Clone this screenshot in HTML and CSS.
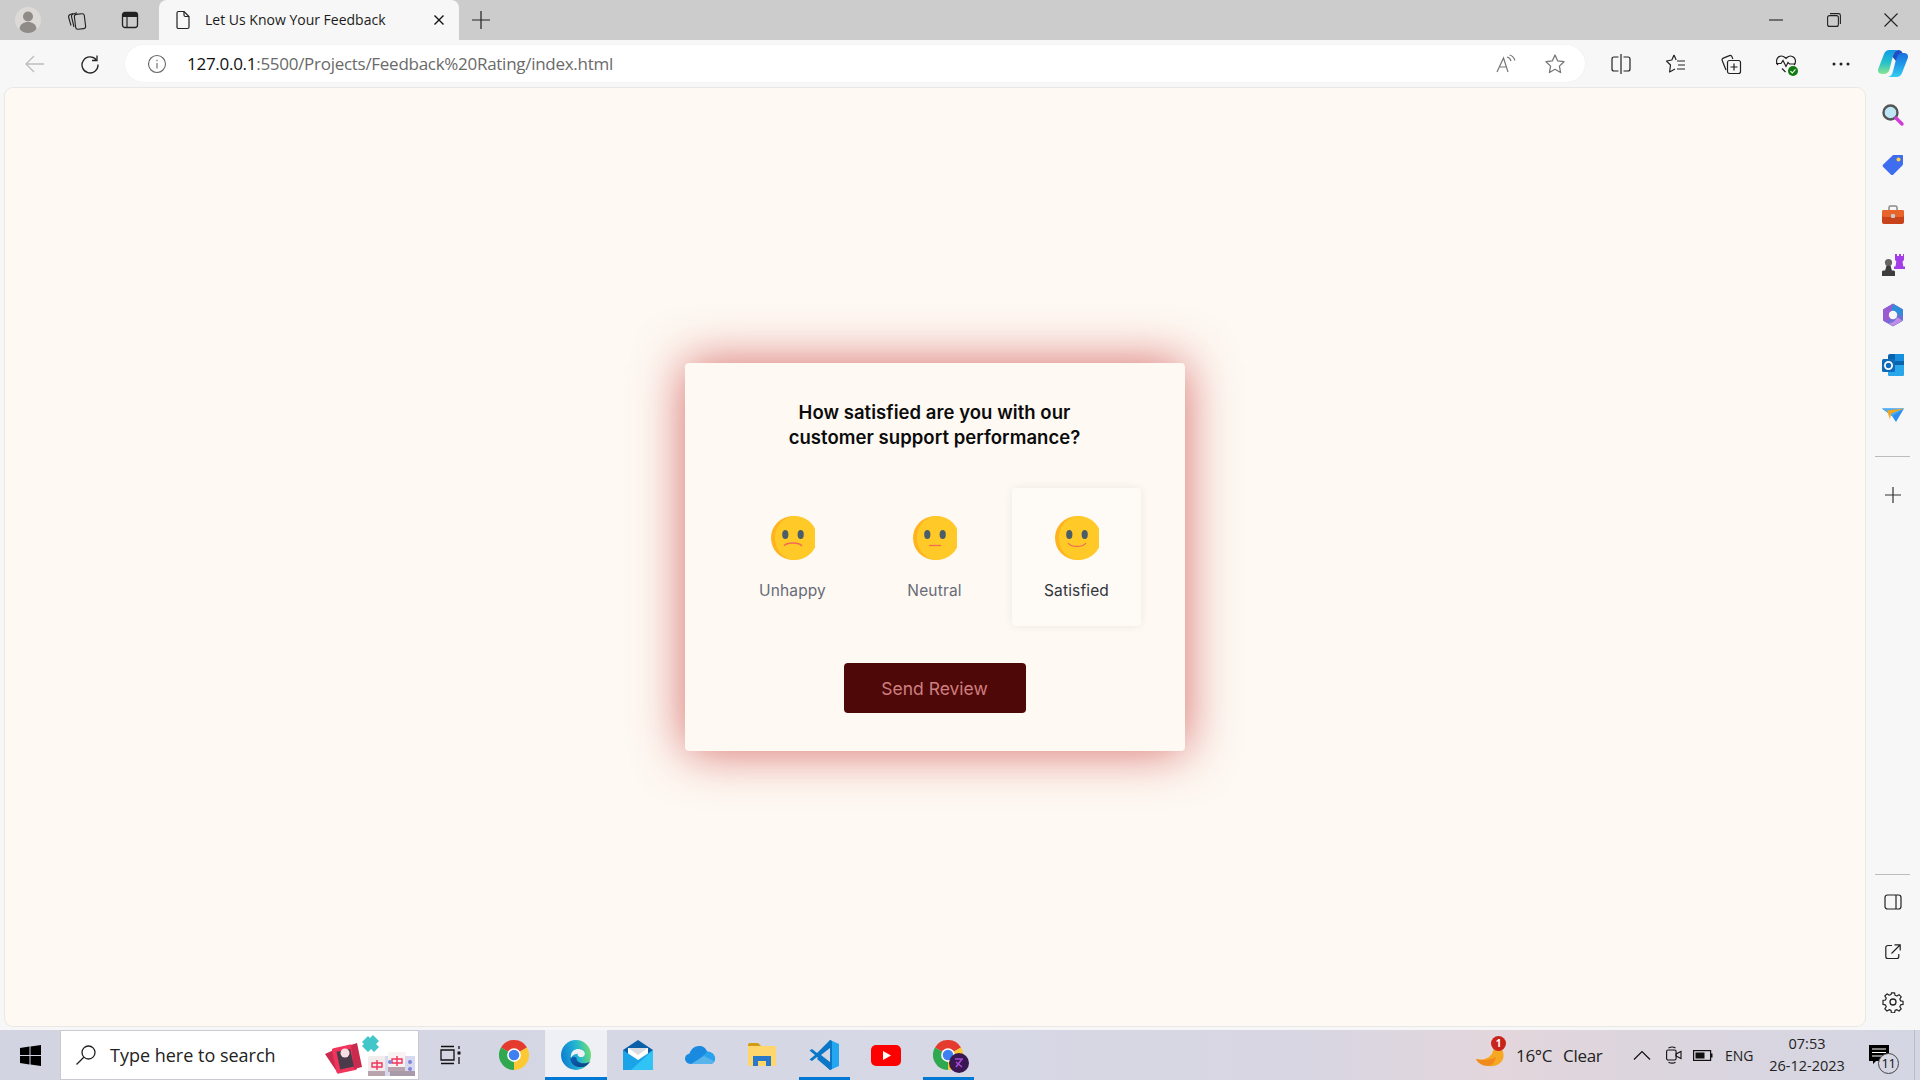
FILE: index.html
```html
<!DOCTYPE html>
<html lang="en">
<head>
<meta charset="utf-8">
<title>Let Us Know Your Feedback</title>
<link rel="stylesheet" href="styles.css">
</head>
<body>
<div class="window">
  <header class="tabstrip">
    <div class="strip-left">
      <span class="strip-btn strip-profile">
        <svg width="26" height="26" viewBox="0 0 26 26"><circle cx="13" cy="13" r="13" fill="#dcdad6"/><circle cx="13" cy="9.5" r="5" fill="#8f8c88"/><path d="M4.5 22c.5-5 4-7 8.500-7s8 2 8.500 7c-2 2.500-5 4-8.500 4s-6.500-1.500-8.500-4z" fill="#8f8c88"/></svg>
      </span>
      <span class="strip-btn strip-coll">
        <svg width="22" height="22" viewBox="0 0 22 22" fill="none" stroke="#222" stroke-width="1.100"><path d="M5 16.500 2.700 8.500C2.300 7 3 6 4.200 5.500L7 4.500"/><path d="M8 18 5.600 8c-.4-1.500.4-2.600 1.600-3l3.800-1.300"/><rect x="9" y="5" width="10" height="15" rx="2.200" transform="rotate(-7 14 12.500)"/></svg>
      </span>
      <span class="strip-btn strip-vert">
        <svg width="20" height="20" viewBox="0 0 20 20" fill="none"><rect x="2.500" y="2.500" width="15" height="15" rx="2.500" stroke="#222" stroke-width="1.300"/><path d="M2.500 5a2.500 2.500 0 0 1 2.500-2.500h10A2.500 2.500 0 0 1 17.500 5v2h-15z" fill="#222"/><path d="M7 7v10" stroke="#222" stroke-width="1.200"/></svg>
      </span>
    </div>
    <div class="tab">
      <svg width="18" height="20" viewBox="0 0 18 20" fill="none" stroke="#222" stroke-width="1.200"><path d="M3 3c0-1 .7-1.500 1.500-1.500H10l5 5V17c0 1-.7 1.500-1.500 1.500h-9C3.700 18.500 3 18 3 17z"/><path d="M10 1.500V5c0 1 .6 1.500 1.500 1.500H15"/></svg>
      <span class="tab-title">Let Us Know Your Feedback</span>
      <svg class="tab-close" width="12" height="12" viewBox="0 0 12 12" stroke="#111" stroke-width="1.400"><path d="M1.500 1.500l9 9M10.500 1.500l-9 9"/></svg>
    </div>
    <span class="new-tab">
      <svg width="18" height="18" viewBox="0 0 18 18" stroke="#222" stroke-width="1.200"><path d="M9 0v18M0 9h18"/></svg>
    </span>
    <div class="win-controls">
      <span class="win-btn"><svg width="14" height="14" viewBox="0 0 14 14" stroke="#222" stroke-width="1.100"><path d="M0 7h14"/></svg></span>
      <span class="win-btn"><svg width="14" height="14" viewBox="0 0 14 14" fill="none" stroke="#222" stroke-width="1.100"><rect x=".6" y="2.600" width="10.800" height="10.800" rx="2"/><path d="M3 .6h8.500c1.100 0 1.900.8 1.900 1.900V11"/></svg></span>
      <span class="win-btn"><svg width="14" height="14" viewBox="0 0 14 14" stroke="#222" stroke-width="1.100"><path d="M.5.500l13 13M13.500.500l-13 13"/></svg></span>
    </div>
  </header>

  <div class="toolbar">
    <span class="nav-btn nav-back"><svg width="20" height="18" viewBox="0 0 20 18" fill="none" stroke="#bdbdbd" stroke-width="1.300"><path d="M19 9H1M9 1 1 9l8 8"/></svg></span>
    <span class="nav-btn nav-reload"><svg width="20" height="20" viewBox="0 0 20 20" fill="none" stroke="#222" stroke-width="1.300"><path d="M16.300 6A8 8 0 1 0 18 10.500"/><path d="M17 1.500V6.500h-5"/></svg></span>
    <div class="address">
      <svg class="addr-info" width="20" height="20" viewBox="0 0 20 20" fill="none" stroke="#666" stroke-width="1.100"><circle cx="10" cy="10" r="8.500"/><path d="M10 9v5.500M10 5.800v1.400"/></svg>
      <span class="url"><span class="url-host">127.0.0.1</span>:5500/Projects/Feedback%20Rating/index.html</span>
      <svg class="addr-read" width="22" height="20" viewBox="0 0 22 20" fill="none" stroke="#777" stroke-width="1.200"><path d="M1 18 7.500 4 12 18M3.500 13h7"/><path d="M11 3c2 .5 3.500 2 4 4M13.500 1c2.500.5 4.500 2.500 5.500 5.500"/></svg>
      <svg class="addr-star" width="22" height="22" viewBox="0 0 22 22" fill="none" stroke="#777" stroke-width="1.300" stroke-linejoin="round"><path d="m11 2 2.700 5.900 6.300.8-4.600 4.400 1.200 6.400L11 16.300l-5.600 3.200 1.200-6.400L2 8.700l6.300-.8z"/></svg>
    </div>
    <div class="tools">
      <span class="tool"><svg width="20" height="22" viewBox="0 0 20 22" fill="none" stroke="#222" stroke-width="1.200"><path d="M7.500 4H3C2 4 1 4.800 1 6v10c0 1.200 1 2 2 2h4.500M12.500 4H17c1 0 2 .8 2 2v10c0 1.200-1 2-2 2h-4.500M10 1v20"/></svg></span>
      <span class="tool"><svg width="22" height="22" viewBox="0 0 22 22" fill="none" stroke="#222" stroke-width="1.200" stroke-linejoin="round"><path d="M9 2 6.800 7 1.500 8l4 4L4.600 19l5.400-3M9 2l2.200 5"/><path d="M12 8h8M13 12h7M12 16h8"/></svg></span>
      <span class="tool"><svg width="22" height="22" viewBox="0 0 22 22" fill="none" stroke="#222" stroke-width="1.200"><path d="M6 17 2.200 7.500C1.800 6.500 2.300 5.500 3.300 5.100l6.200-2.500c1-.4 2 0 2.400 1l1 2.400"/><rect x="7.500" y="7.500" width="13" height="13" rx="2"/><path d="M14 10.500v7M10.500 14h7"/></svg></span>
      <span class="tool tool-health">
        <svg width="22" height="20" viewBox="0 0 22 20" fill="none" stroke="#222" stroke-width="1.200"><path d="M3 11C1 9 1 5.500 3 3.500c2-2 5-2 7 0l1 1 1-1c2-2 5-2 7 0 2 2 2 5.500 0 7.500"/><path d="M1 9.500h5l2-3 3 6 2-4 1.500 1.500H20M7 14.500l3.500 3.500"/></svg>
        <svg class="health-badge" width="10" height="10" viewBox="0 0 10 10"><circle cx="5" cy="5" r="5" fill="#107c10"/><path d="M2.500 5.200 4.300 7l3.200-3.600" fill="none" stroke="#fff" stroke-width="1.100"/></svg>
      </span>
      <span class="tool"><svg width="20" height="4" viewBox="0 0 20 4" fill="#222"><circle cx="3" cy="2" r="1.500"/><circle cx="10" cy="2" r="1.500"/><circle cx="17" cy="2" r="1.500"/></svg></span>
      <span class="tool tool-copilot">
        <svg width="30" height="27" viewBox="0 0 30 27">
          <defs>
            <linearGradient id="cpA" x1="0" y1="0" x2="0" y2="1"><stop offset="0" stop-color="#0f9be8"/><stop offset=".55" stop-color="#2ac3c8"/><stop offset="1" stop-color="#8be58f"/></linearGradient>
            <linearGradient id="cpB" x1="0" y1="0" x2="0" y2="1"><stop offset="0" stop-color="#1b6fe0"/><stop offset=".5" stop-color="#1f9be8"/><stop offset="1" stop-color="#35cdf2"/></linearGradient>
          </defs>
          <path d="M6 4C7 1.500 9 0 11.500 0H20c-3 .8-4 2.500-4.800 5L11.500 19.500c-.8 2.800-2.800 4.500-5.500 4.500H4C1 24-.7 21.700.2 19z" fill="url(#cpA)"/>
          <path d="M24 23c-1 2.500-3 4-5.500 4H10c3-.8 4-2.500 4.800-5L18.500 7.500C19.300 4.700 21.300 3 24 3h2c3 0 4.700 2.300 3.800 5z" fill="url(#cpB)"/>
          <path d="M20 0c2.500 0 3.800 1.300 4.500 3-2.500.3-4.700 1.800-5.500 4.500l-1 3.400-3.500-3.900.7-2C16 2.500 17 .8 20 0z" fill="#1c4fc4"/>
        </svg>
      </span>
    </div>
  </div>

  <div class="main">
    <main class="viewport">
      <section class="card">
        <h1 class="question">How satisfied are you with our<br>customer support performance?</h1>
        <div class="ratings">
          <div class="rating">
            <svg class="emoji" viewBox="0 0 44 44"><circle cx="22" cy="22" r="22" fill="#ffb41f"/><path d="M24 0a22 22 0 0 1 0 44C13 44 4 34 4 22S13 0 24 0z" fill="#ffca28"/><ellipse cx="14.300" cy="18.500" rx="3.100" ry="4.500" fill="#4b5d69"/><ellipse cx="29.700" cy="18.500" rx="3.100" ry="4.500" fill="#4b5d69"/><path d="M13 30c2.500-4 15-4 18 0" fill="none" stroke="#ef6c55" stroke-width="1.300"/></svg>
            <span class="rating-label">Unhappy</span>
          </div>
          <div class="rating">
            <svg class="emoji" viewBox="0 0 44 44"><circle cx="22" cy="22" r="22" fill="#ffb41f"/><path d="M24 0a22 22 0 0 1 0 44C13 44 4 34 4 22S13 0 24 0z" fill="#ffca28"/><ellipse cx="14.300" cy="18.500" rx="3.100" ry="4.500" fill="#4b5d69"/><ellipse cx="29.700" cy="18.500" rx="3.100" ry="4.500" fill="#4b5d69"/><path d="M16 29.500h12" fill="none" stroke="#ef6c55" stroke-width="1.300"/></svg>
            <span class="rating-label">Neutral</span>
          </div>
          <div class="rating rating-active">
            <svg class="emoji" viewBox="0 0 44 44"><circle cx="22" cy="22" r="22" fill="#ffb41f"/><path d="M24 0a22 22 0 0 1 0 44C13 44 4 34 4 22S13 0 24 0z" fill="#ffca28"/><ellipse cx="14.300" cy="18.500" rx="3.100" ry="4.500" fill="#4b5d69"/><ellipse cx="29.700" cy="18.500" rx="3.100" ry="4.500" fill="#4b5d69"/><path d="M13 27c3 4.500 15 4.500 18 0" fill="none" stroke="#ef6c55" stroke-width="1.300"/></svg>
            <span class="rating-label">Satisfied</span>
          </div>
        </div>
        <button class="send" type="button">Send Review</button>
      </section>
    </main>
    <aside class="sidebar">
      <div class="side-top">
        <span class="side-icon"><svg width="24" height="24" viewBox="0 0 24 24"><circle cx="9.500" cy="9.500" r="7" fill="#bfe6f7" stroke="#555" stroke-width="2.400"/><path d="m15 15 6 6" stroke="#d23bd8" stroke-width="3.400" stroke-linecap="round"/></svg></span>
        <span class="side-icon"><svg width="24" height="24" viewBox="0 0 24 24"><path d="M13 2h8c.6 0 1 .4 1 1v8c0 .6-.2 1-.6 1.400l-9 9c-.8.800-1.800.800-2.600 0L2.200 14c-.8-.8-.8-1.800 0-2.600l9.400-9C12 2.200 12.400 2 13 2z" fill="#3f6df0"/><circle cx="17.500" cy="6.500" r="2" fill="#ffd04a"/></svg></span>
        <span class="side-icon"><svg width="24" height="24" viewBox="0 0 24 24"><path d="M8 7V4.500C8 3.500 8.700 3 9.500 3h5c.8 0 1.500.5 1.500 1.500V7" fill="none" stroke="#8a8a8a" stroke-width="1.500"/><rect x="1" y="7" width="22" height="14" rx="2" fill="#c9431a"/><rect x="1" y="7" width="22" height="7" rx="2" fill="#e9642a"/><rect x="10" y="11" width="4" height="4" rx="1" fill="#c9c9c9"/></svg></span>
        <span class="side-icon"><svg width="24" height="24" viewBox="0 0 24 24"><path d="M14 1h2v2h2V1h2v2h2V1h1v6l-1.500 1.500.8 5H24V16H13v-2.500h1.500l.8-5L14 7z" fill="#a33de8"/><circle cx="7.500" cy="9.500" r="3.600" fill="#666"/><path d="M5.500 12.500h4l1.500 5.500H4zM1 19c0-1 .7-1.500 1.500-1.500h10c.8 0 1.500.5 1.500 1.500v4H1z" fill="#3d3d3d"/></svg></span>
        <span class="side-icon"><svg width="24" height="24" viewBox="0 0 24 24"><path d="M12 1 21.500 6.500v11L12 23l-9.500-5.500v-11z" fill="#6d6fd8" stroke="#6d6fd8" stroke-width="1" stroke-linejoin="round"/><path d="M12 1 21.500 6.500v7l-6-3.500a4.500 4.500 0 0 0-6 0z" fill="#2c8fd9"/><path d="M2.500 6.500 12 1l-2.500 9v5l-3 4-4-2z" fill="#9a5bd0"/><path d="M21.500 17.500 12 23l-5-3c4 0 8-2 8.500-6z" fill="#c08be6"/><circle cx="12" cy="12" r="4.200" fill="#f7f7f7"/></svg></span>
        <span class="side-icon"><svg width="24" height="24" viewBox="0 0 24 24"><rect x="7" y="1" width="16" height="22" rx="2" fill="#0a64ad"/><path d="M7 12h16v9a2 2 0 0 1-2 2H9a2 2 0 0 1-2-2z" fill="#28a8ea"/><path d="M14 1h9v7h-9z" fill="#1490df"/><rect x="1" y="6" width="13" height="13" rx="1.500" fill="#0f6cbd"/><circle cx="7.500" cy="12.500" r="3.600" fill="none" stroke="#fff" stroke-width="1.800"/></svg></span>
        <span class="side-icon"><svg width="24" height="24" viewBox="0 0 24 24"><path d="M1 5.500h22L15 19l-4-6z" fill="#2f8ff0"/><path d="M1 5.500h22L11 13z" fill="#4aaef5"/><path d="M6 7.500 23 5.500 10 10.500l-1 6z" fill="#f4a71d"/></svg></span>
        <hr class="side-sep side-sep-top">
        <span class="side-icon"><svg width="16" height="16" viewBox="0 0 16 16" stroke="#333" stroke-width="1.200"><path d="M8 0v16M0 8h16"/></svg></span>
      </div>
      <div class="side-bottom">
        <hr class="side-sep">
        <span class="side-icon"><svg width="20" height="20" viewBox="0 0 20 20" fill="none" stroke="#222" stroke-width="1.200"><rect x="2" y="3" width="16" height="14" rx="2.500"/><path d="M13 3v14"/></svg></span>
        <span class="side-icon"><svg width="20" height="20" viewBox="0 0 20 20" fill="none" stroke="#222" stroke-width="1.200"><path d="M9 3.500H5C3.500 3.500 2.800 4.500 2.800 5.500v9c0 1.200.8 2 2 2h9c1.200 0 2-.8 2-2V12"/><path d="M8.500 11.500 17 3M11.500 2.800H17.200V8.500"/></svg></span>
        <span class="side-icon"><svg width="22" height="22" viewBox="0 0 22 22" fill="none" stroke="#222" stroke-width="1.300" stroke-linejoin="round"><path d="m9.300 1h3.400l.5 2.700 2 .8 2.300-1.500 2.400 2.400-1.500 2.300.8 2 2.700.5v3.400l-2.700.5-.8 2 1.500 2.300-2.400 2.400-2.300-1.500-2 .8-.5 2.700H9.300l-.5-2.700-2-.8-2.300 1.500-2.400-2.400 1.500-2.300-.8-2-2.700-.5V9.300l2.700-.5.8-2-1.500-2.300 2.400-2.400 2.300 1.500 2-.8z" transform="translate(.9 .9) scale(.92)"/><circle cx="11" cy="11" r="3"/></svg></span>
      </div>
    </aside>
  </div>

  <footer class="taskbar">
    <div class="task-left">
      <span class="start"><svg width="21" height="21" viewBox="0 0 21 21" fill="#000"><path d="M0 3 9.500 1.600v8.400H0zM10.500 1.500 21 0v10h-10.500zM0 11h9.500v8.400L0 18zM10.500 11H21v10l-10.500-1.500z"/></svg></span>
      <div class="search">
        <svg width="22" height="22" viewBox="0 0 22 22" fill="none" stroke="#222" stroke-width="1.300"><circle cx="13.500" cy="8.500" r="6.500"/><path d="M8.800 13.200 1.500 20.500"/></svg>
        <span class="search-text">Type here to search</span>
        <span class="search-art">
          <svg width="92" height="42" viewBox="0 0 92 42">
            <path d="M1 20 14 14l7 21-8 3z" fill="#c92a4e"/>
            <rect x="10" y="12" width="21" height="26" rx="2" transform="rotate(-12 21 25)" fill="#f0345c"/>
            <path d="M27 11l6-2 5 24-8 2z" fill="#c92a4e"/>
            <rect x="14" y="16" width="14" height="18" transform="rotate(-12 22 24)" fill="#4a3a4a"/>
            <circle cx="21" cy="19" r="4.500" fill="#f4dfe4"/>
            <path d="M38 8 44 2l2 2 3-3 6 6-3 3 3 3-5 5-3-3-3 3-6-6 2-2z" fill="#41c7c9"/>
            <rect x="44" y="22" width="18" height="20" rx="2" fill="#f3ecec"/>
            <rect x="44" y="37" width="18" height="5" fill="#b9a3ad"/>
            <rect x="61" y="22" width="10" height="20" fill="#d8d8ee"/>
            <rect x="64" y="18" width="18" height="20" rx="2" fill="#f8f2f2"/>
            <rect x="64" y="33" width="18" height="5" fill="#b9a3ad"/>
            <rect x="81" y="22" width="10" height="20" fill="#d8d8ee"/>
            <rect x="66" y="37" width="25" height="5" fill="#a89aa8"/>
            <path d="M53 26v10M48 29h10v4H48zM73 22v10M68 25h10v4H68z" fill="none" stroke="#f0345c" stroke-width="1.400"/>
            <circle cx="66" cy="28" r="2" fill="#7d86d8"/><circle cx="86" cy="28" r="2" fill="#7d86d8"/><circle cx="86" cy="35" r="2" fill="#7d86d8"/>
          </svg>
        </span>
      </div>
      <span class="cell cell-taskview"><svg width="22" height="20" viewBox="0 0 22 20" fill="none" stroke="#111" stroke-width="1.300"><path d="M1 1.500h13M1 18.500h13M1 5h13v10H1zM19 1v3M19 12v7"/><rect x="17.500" y="6.500" width="3" height="3" fill="#111" stroke="none"/></svg></span>
      <span class="cell">
        <svg width="30" height="30" viewBox="0 0 48 48"><path d="M24 24 3.200 12A24 24 0 0 1 44.800 12z" fill="#e53a2e"/><path d="M24 24 44.800 12A24 24 0 0 1 24 48z" fill="#fcc934"/><path d="M24 24V48A24 24 0 0 1 3.200 12z" fill="#2fa84f"/><circle cx="24" cy="24" r="11" fill="#fff"/><circle cx="24" cy="24" r="8.500" fill="#3f7ff0"/></svg>
      </span>
      <span class="cell cell-active">
        <svg width="30" height="30" viewBox="0 0 48 48">
          <defs>
            <linearGradient id="edgeA" x1="0" y1=".5" x2="1" y2=".3"><stop offset="0" stop-color="#0e7fd2"/><stop offset=".55" stop-color="#24b6d2"/><stop offset="1" stop-color="#6fe06c"/></linearGradient>
            <linearGradient id="edgeB" x1="0" y1="0" x2="1" y2="1"><stop offset="0" stop-color="#0d63b8"/><stop offset="1" stop-color="#0a3f80"/></linearGradient>
          </defs>
          <circle cx="24" cy="24" r="24" fill="url(#edgeA)"/>
          <path d="M15 29c0 10 10 16 20 14 5-1 9-4 12-9-4 3-9 4-14 3-6-1-9-5-8-9-4-2-10-2-10 1z" fill="url(#edgeB)"/>
          <path d="M16 24c1-7 8-11 15-9 5 1 8 5 7 8-1 4-5 5-8 4-3-1-4-3-3-5-4 0-9 2-11 7-.5-1-.5-3 0-5z" fill="#eff0f6"/>
        </svg>
      </span>
      <span class="cell">
        <svg width="30" height="30" viewBox="0 0 30 30"><path d="M15 0 30 10v4H0v-4z" fill="#0b5fa8"/><path d="M5 8h20v12H5z" fill="#fff"/><path d="M5 8h20l-10 7z" fill="#d9dde2"/><path d="M0 10l15 10 15-10v20H0z" fill="#1ba3e8"/><path d="M30 10v20H8z" fill="#30c3f5"/></svg>
      </span>
      <span class="cell">
        <svg width="30" height="20" viewBox="0 0 30 20"><path d="M6 19C2 19 0 16 0 13.500 0 11 2 9 4.500 8.500 6 4 9.500 1 14 1c4 0 7 2 8 5.500 4 0 8 3 8 7 0 3-2 5.500-5 5.500z" fill="#1a8ae0"/><path d="M22 6.500c4 0 8 3 8 7 0 3-2 5.500-5 5.500H8L20 9z" fill="#2aa3ee"/><path d="M6 19h19c2 0 3.500-1 4.500-2.500L19 11z" fill="#59b4ec"/></svg>
      </span>
      <span class="cell">
        <svg width="28" height="24" viewBox="0 0 28 24"><path d="M0 2c0-1 .7-2 2-2h8l3 3h-13z" fill="#d39a14"/><rect y="3" width="28" height="20" rx="1" fill="#ffd66b"/><path d="M5 23V13h18v10h-5v-5h-8v5z" fill="#2a78c8"/></svg>
      </span>
      <span class="cell cell-running">
        <svg width="30" height="30" viewBox="0 0 30 30"><path d="M21 0 30 4v22l-9 4z" fill="#24a6f0"/><path d="M21 0v30L8 19l4-4z" fill="#0a78c7"/><path d="M21 0 8 13 3 9 .5 10.500 6 15 .5 19.500 3 21l5-4 13 13 2-1V1z" fill="#0a78c7"/><path d="M21 8v14l-9-7z" fill="#d4d6e4"/></svg>
      </span>
      <span class="cell">
        <svg width="30" height="21" viewBox="0 0 30 21"><rect width="30" height="21" rx="5" fill="#f00"/><path d="m12 6 8 4.500-8 4.500z" fill="#fff"/></svg>
      </span>
      <span class="cell cell-running cell-profile">
        <svg width="30" height="30" viewBox="0 0 48 48"><path d="M24 24 3.200 12A24 24 0 0 1 44.800 12z" fill="#e53a2e"/><path d="M24 24 44.800 12A24 24 0 0 1 24 48z" fill="#fcc934"/><path d="M24 24V48A24 24 0 0 1 3.200 12z" fill="#2fa84f"/><circle cx="24" cy="24" r="11" fill="#fff"/><circle cx="24" cy="24" r="8.500" fill="#3f7ff0"/></svg>
        <svg class="profile-badge" width="20" height="20" viewBox="0 0 20 20"><circle cx="10" cy="10" r="10" fill="#3a1750"/><path d="M6 6h8M13 6 7 14M7 9l6 5" fill="none" stroke="#a44bd8" stroke-width="1.600"/></svg>
      </span>
    </div>
    <div class="tray">
      <span class="weather">
        <svg width="30" height="26" viewBox="0 0 30 26"><path d="M0 17c7 2 15-1 17-8 1-3 2-5 3-7 6 3 9 9 7 15-2 5-8 8-14 7C7 23 2 21 0 17z" fill="#f7a823"/><path d="M0 17c7 2 14 1 20-2-1 5-4 9-8 9C6 24 2 21 0 17z" fill="#f08a1c"/></svg>
        <span class="weather-badge">1</span>
      </span>
      <span class="weather-temp">16°C</span>
      <span class="weather-text">Clear</span>
      <span class="tray-icon tray-chevron"><svg width="18" height="10" viewBox="0 0 18 10" fill="none" stroke="#111" stroke-width="1.200"><path d="M1 9.500 9 1.500l8 8"/></svg></span>
      <span class="tray-icon tray-meet"><svg width="16" height="18" viewBox="0 0 16 18" fill="none" stroke="#111" stroke-width="1.100"><rect x=".6" y="4" width="9.500" height="10" rx="1.500"/><path d="m10 8 5-2.500v7L10 10zM2.500 2C5 .8 7.500.8 9.500 2M2.500 16.200c2.500 1.200 5 1.200 7 0"/></svg></span>
      <span class="tray-icon tray-batt"><svg width="20" height="11" viewBox="0 0 20 11" fill="none"><rect x=".6" y=".6" width="17" height="9.800" stroke="#111" stroke-width="1.200"/><rect x="2.500" y="2.500" width="9" height="6" fill="#111"/><rect x="18" y="3.500" width="1.500" height="4" fill="#111"/></svg></span>
      <span class="tray-lang">ENG</span>
      <span class="clock"><span>07:53</span><span>26-12-2023</span></span>
      <span class="notify">
        <svg width="20" height="20" viewBox="0 0 20 20"><path d="M0 0h20v16H7l-3 3v-3H0z" fill="#000"/><path d="M3 4h14M3 7.500h14M3 11h14" stroke="#fff" stroke-width="1"/></svg>
        <span class="notify-count">11</span>
      </span>
      <span class="show-desktop"></span>
    </div>
  </footer>
</div>
</body>
</html>
```

FILE: styles.css
```css
* { box-sizing: border-box; }
html, body { margin: 0; height: 100%; }
body { font-family: "Open Sans", "Noto Sans", sans-serif; background: #f7f7f7; overflow: hidden; }

.window { display: flex; flex-direction: column; width: 1920px; height: 1080px; }

/* tab strip */
.tabstrip { display: flex; align-items: center; height: 40px; background: #cccccc; flex: none; }
.strip-left { display: flex; align-items: center; width: 159px; }
.strip-btn { display: flex; align-items: center; justify-content: center; }
.strip-profile { width: 26px; margin-left: 15px; }
.strip-coll { width: 22px; margin-left: 25px; }
.strip-vert { width: 20px; margin-left: 32px; }
.tab { display: flex; align-items: center; width: 300px; height: 40px; background: #f7f7f7; border-radius: 8px 8px 0 0; padding: 0 0 1px 15px; }
.tab-title { font-size: 14px; color: #1b1b1b; margin-left: 13px; width: 228px; white-space: nowrap; }
.tab-close { flex: none; }
.new-tab { display: flex; margin-left: 13px; }
.win-controls { display: flex; margin-left: auto; }
.win-btn { display: flex; align-items: center; justify-content: center; width: 57.500px; height: 40px; }

/* toolbar */
.toolbar { display: flex; align-items: center; height: 48px; background: #f7f7f7; flex: none; padding-bottom: 1px; }
.nav-btn { display: flex; align-items: center; justify-content: center; }
.nav-back { width: 20px; margin-left: 25px; }
.nav-reload { width: 20px; margin-left: 35px; }
.address { display: flex; align-items: center; width: 1460px; height: 37px; margin-left: 25px; background: #fff; border-radius: 19px; padding-left: 22px; box-shadow: 0 0 2px rgba(0,0,0,.06); }
.url { font-size: 17px; color: #6a6a6a; margin-left: 20px; white-space: nowrap; letter-spacing: -.28px; }
.url-host { color: #111; }
.addr-read { margin-left: auto; }
.addr-star { margin-left: 26px; margin-right: 19px; }
.tools { display: flex; align-items: center; margin-left: 8px; }
.tool { display: flex; align-items: center; justify-content: center; width: 55px; height: 48px; position: relative; }
.tool-copilot { width: 50px; margin-left: 0; }
.health-badge { position: absolute; left: 30px; top: 26px; }

/* main area */
.main { display: flex; flex: 1; min-height: 0; }
.viewport { display: flex; align-items: center; justify-content: center; width: 1860px; height: 938px; margin-left: 5px; background: #fef9f3; border-radius: 8px; box-shadow: 0 0 0 1px #e9e8e6; }
.card { display: flex; flex-direction: column; align-items: center; width: 500px; height: 388px; padding: 37px 44px 0 43px; background: #fef9f3; border-radius: 4px; box-shadow: 0 0 50px rgba(200,50,50,.72); }
.question { margin: 0; font-family: "Inter", "Noto Sans", sans-serif; font-size: 18.500px; line-height: 25px; font-weight: 600; color: #0b0b0b; text-align: center; letter-spacing: .05px; }
.ratings { display: flex; gap: 13px; margin-top: 38px; }
.rating { display: flex; flex-direction: column; align-items: center; width: 129px; height: 138px; padding-top: 28px; border-radius: 4px; }
.rating-active { background: #fefaf6; box-shadow: 0 0 10px rgba(0,0,0,.07); }
.emoji { width: 44px; height: 44px; flex: none; }
.rating-label { margin-top: 20px; font-family: "Inter", "Noto Sans", sans-serif; font-size: 15.500px; line-height: 21px; color: #676c78; letter-spacing: .15px; }
.rating-active .rating-label { color: #33353b; }
.send { width: 182px; height: 50px; margin-top: 37px; border: 0; border-radius: 4px; background: #4e0808; color: #cf7f80; font-family: "Inter", "Noto Sans", sans-serif; font-size: 17.500px; cursor: pointer; }

/* sidebar */
.sidebar { display: flex; flex-direction: column; justify-content: space-between; width: 55px; height: 939px; padding-top: 2px; }
.side-top, .side-bottom { display: flex; flex-direction: column; align-items: center; }
.side-icon { display: flex; align-items: center; justify-content: center; width: 30px; height: 50px; }
.side-sep { width: 35px; height: 1px; margin: 0; border: 0; background: #bcbcbc; }
.side-sep-top { margin: 16px 0 13px; }
.side-bottom .side-sep { margin-bottom: 2px; }

/* taskbar */
.taskbar { display: flex; justify-content: space-between; height: 50px; flex: none; background: linear-gradient(90deg, #d2d4e2 0%, #d6d8e5 50%, #d8d6e2 68%, #e3d6dc 78%, #dcd5de 86%, #d3d6e3 100%); }
.task-left { display: flex; }
.start { display: flex; align-items: center; justify-content: center; width: 60px; }
.search { display: flex; align-items: center; width: 359px; height: 50px; padding: 0 0 0 14px; background: #fff; border: 1px solid #c9c9d2; }
.search-text { margin-left: 13px; font-size: 18px; color: #222; white-space: nowrap; }
.search-art { display: flex; margin-left: auto; margin-right: 2px; }
.cell { display: flex; align-items: center; justify-content: center; width: 62px; height: 50px; position: relative; }
.cell-taskview { width: 64px; }
.cell-active { background: #eff0f6 linear-gradient(#0078d4, #0078d4) bottom / 100% 3px no-repeat; }
.cell-running { background: linear-gradient(#0078d4, #0078d4) center bottom / 51px 3px no-repeat; }
.profile-badge { position: absolute; left: 32px; top: 23px; }

.tray { display: flex; align-items: center; }
.weather { position: relative; display: flex; width: 30px; margin-right: 10px; }
.weather-badge { position: absolute; left: 15px; top: -6px; width: 15px; height: 15px; border-radius: 50%; background: #c9241c; color: #fff; font-size: 10px; line-height: 15px; font-weight: 700; text-align: center; }
.weather-temp, .weather-text { font-size: 17px; color: #222; letter-spacing: -.3px; white-space: nowrap; }
.weather-temp { width: 47px; }
.weather-text { width: 45px; }
.tray-icon { display: flex; align-items: center; justify-content: center; }
.tray-chevron { width: 18px; margin-left: 25px; }
.tray-meet { width: 16px; margin-left: 15px; }
.tray-batt { width: 20px; margin-left: 11px; }
.tray-lang { width: 30px; margin-left: 12px; font-size: 14px; color: #222; white-space: nowrap; }
.clock { display: flex; flex-direction: column; align-items: center; width: 82px; margin-left: 11px; font-size: 14.500px; line-height: 22px; color: #222; white-space: nowrap; }
.notify { position: relative; display: flex; width: 20px; margin-left: 21px; margin-right: 25px; }
.notify-count { position: absolute; left: 9px; top: 8px; width: 21px; height: 21px; border: 1px solid #444; border-radius: 50%; background: #d4d6e3; font-size: 13px; line-height: 19px; text-align: center; color: #111; letter-spacing: -.5px; }
.show-desktop { width: 1px; height: 50px; background: #b9bbc6; margin-right: 5px; }
```
